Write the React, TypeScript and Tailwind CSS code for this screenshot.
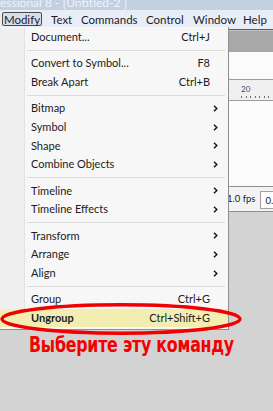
import React from "react";

type Item =
  | { kind: "item"; label: string; shortcut?: string; sub?: boolean; active?: boolean }
  | { kind: "sep" };

const ITEMS: Item[] = [
  { kind: "item", label: "Document...", shortcut: "Ctrl+J" },
  { kind: "sep" },
  { kind: "item", label: "Convert to Symbol...", shortcut: "F8" },
  { kind: "item", label: "Break Apart", shortcut: "Ctrl+B" },
  { kind: "sep" },
  { kind: "item", label: "Bitmap", sub: true },
  { kind: "item", label: "Symbol", sub: true },
  { kind: "item", label: "Shape", sub: true },
  { kind: "item", label: "Combine Objects", sub: true },
  { kind: "sep" },
  { kind: "item", label: "Timeline", sub: true },
  { kind: "item", label: "Timeline Effects", sub: true },
  { kind: "sep" },
  { kind: "item", label: "Transform", sub: true },
  { kind: "item", label: "Arrange", sub: true },
  { kind: "item", label: "Align", sub: true },
  { kind: "sep" },
  { kind: "item", label: "Group", shortcut: "Ctrl+G" },
  { kind: "item", label: "Ungroup", shortcut: "Ctrl+Shift+G", active: true },
];

// menu bar labels with the slot width each one takes
const MENUBAR = [
  { label: "Text", w: "w-[30px]" },
  { label: "Commands", w: "w-[65px]" },
  { label: "Control", w: "w-[47px]" },
  { label: "Window", w: "w-[50px]" },
  { label: "Help", w: "w-[30px]" },
];

function Chevron() {
  return (
    <svg width="5" height="7" viewBox="0 0 5 7" className="block">
      <path d="M1 0.8 L3.8 3.5 L1 6.2" fill="none" stroke="#1a1a1a" strokeWidth="1.5" />
    </svg>
  );
}

function ModifyMenu() {
  return (
    // dropdown hangs over the stage, so it sits absolutely under the menu bar
    <div className="absolute left-0 top-[27px] w-[229px] border-r border-b border-[#8e8e8e] bg-[#f7f7f7] pt-[1px] pb-[2px]">
      <div className="relative">
        {/* icon gutter */}
        <div className="absolute left-0 top-0 bottom-0 w-[25px] border-r border-[#e2e2e2] bg-[#efefef]" />
        {ITEMS.map((it, i) =>
          it.kind === "sep" ? (
            <div key={i} className="relative flex h-[7.8px] items-center pl-[27px] pr-[3px]">
              <div className="h-px w-full bg-[#dcdcdc]" />
            </div>
          ) : (
            <div
              key={i}
              className={`relative flex h-[18.6px] items-center pl-[31px] pr-[10px] text-[11px] text-[#1b1b24] ${
                it.active ? "bg-[#f2eeb2] font-bold" : ""
              }`}
            >
              <span className="flex-1 whitespace-nowrap">{it.label}</span>
              {it.shortcut && <span className="mr-[8px] whitespace-nowrap font-normal">{it.shortcut}</span>}
              {it.sub && <Chevron />}
            </div>
          )
        )}
      </div>
    </div>
  );
}

export default function App() {
  return (
    <div
      className="relative h-[411px] w-[273px] overflow-hidden bg-[#d3d3d3]"
      style={{ fontFamily: 'Lato, "Noto Sans", sans-serif' }}
    >
      {/* title bar */}
      <div className="h-[10px] overflow-hidden bg-[#c3d0e2]">
        <div className="-mt-[5px] whitespace-nowrap text-[12px] leading-[15px] text-[#eef3fa]">
          essional 8 - [Untitled-2 ]
        </div>
      </div>

      {/* menu bar */}
      <div className="flex h-[19px] items-start bg-[#e9eef6] pl-[2px] pt-[2px] text-[11.5px] leading-[13px] text-[#1b1b30]">
        <div className="flex h-[14px] w-[41px] items-center justify-center rounded-[2px] border border-[#4a4a4a] bg-[#d7dfeb]">
          Modify
        </div>
        <div className="ml-[9px] flex">
          {MENUBAR.map((m) => (
            <div key={m.label} className={`${m.w} h-[14px] whitespace-nowrap pt-px`}>
              {m.label}
            </div>
          ))}
        </div>
      </div>

      {/* stage behind the menu */}
      <div className="h-px bg-[#5a5a5a]" />
      <div className="h-[22px] border-t border-[#c4c4c4] bg-[#a8a8a8]" />
      <div className="h-[27px] bg-[#fbfbfb]" />
      <div className="h-[22px] border-y border-[#9c9c9c] bg-[#f0f0f0] pl-[241px]">
        <div className="pt-[5px] text-[8px] leading-[9px] text-[#3b4a70]">20</div>
        <div className="mt-[2px] flex gap-[4px]">
          {Array.from({ length: 8 }).map((_, i) => (
            <div key={i} className="h-[2px] w-px bg-[#707070]" />
          ))}
        </div>
      </div>
      <div className="h-[85px] bg-[#fcfcfc]" />
      <div className="flex h-[26px] items-end border-y border-[#8f8f8f] bg-[#f3f3f3] pb-[2px] pl-[227px] text-[9.5px] text-[#222]">
        <span className="whitespace-nowrap pb-[3px] pr-[5px]">1.0 fps</span>
        <div className="flex h-[18px] items-center border border-[#a0a0a0] bg-white pl-[4px] pt-[3px]">
          <span className="whitespace-nowrap">0.0s</span>
        </div>
      </div>

      <ModifyMenu />

      {/* red highlight ring around Ungroup */}
      <svg className="absolute left-0 top-[303px]" width="244" height="32" viewBox="0 0 244 32">
        <ellipse cx="121" cy="16" rx="119" ry="14.2" fill="none" stroke="#f00000" strokeWidth="3.4" />
      </svg>

      {/* caption */}
      <div className="absolute left-[29px] top-[333px]">
        <div
          className="origin-left scale-x-[0.8] whitespace-nowrap text-[22px] font-black leading-[24px] tracking-[-0.3px] text-[#f40000]"
          style={{ fontFamily: '"Liberation Sans Narrow", "DejaVu Sans Condensed", "Liberation Sans", sans-serif' }}
        >
          Выберите эту команду
        </div>
      </div>
    </div>
  );
}
